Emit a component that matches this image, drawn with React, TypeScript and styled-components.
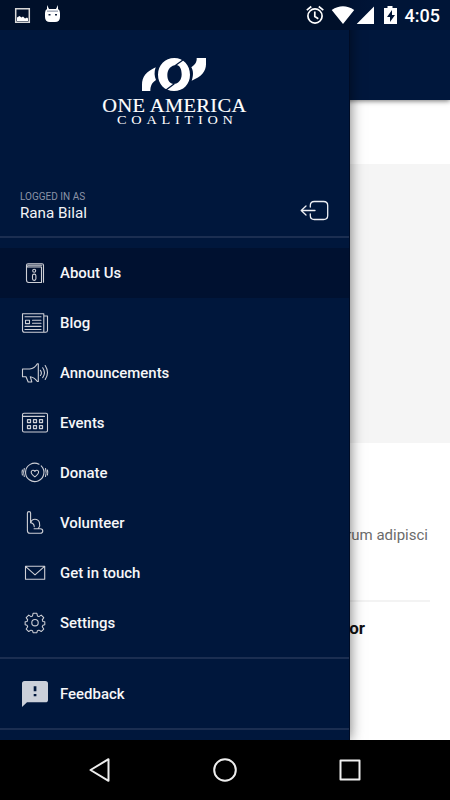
import React from 'react';
import styled, { createGlobalStyle } from 'styled-components';

const GlobalStyle = createGlobalStyle`
  * { box-sizing: border-box; }
  body { margin: 0; background: #000; font-family: Roboto, sans-serif; }
  svg { display: block; flex: none; }
`;

const Screen = styled.div`
  position: relative;
  width: 450px;
  height: 800px;
  overflow: hidden;
  display: flex;
  flex-direction: column;
  background: #fff;
`;
const Page = styled.main`
  flex: 1;
  display: flex;
  flex-direction: column;
`;
const AppBar = styled.header`
  height: 100px;
  flex: none;
  background: #00173c;
  box-shadow: 0 1px 5px rgba(0, 0, 0, 0.55);
  z-index: 1;
`;
const Hero = styled.div`
  height: 279px;
  margin-top: 64px;
  flex: none;
  background: #f5f5f5;
`;
const Excerpt = styled.p`
  margin: 80px 22px 0 0;
  text-align: right;
  font-size: 15px;
  line-height: 24px;
  color: #6b6b6b;
`;
const Rule = styled.div`
  height: 2px;
  margin: 53px 20px 0;
  background: #f3f3f3;
`;
const Heading = styled.h2`
  margin: 14px 85px 0 0;
  text-align: right;
  font-size: 17px;
  line-height: 24px;
  font-weight: 700;
  color: #111;
`;
const Drawer = styled.aside`
  position: absolute;
  top: 0;
  left: 0;
  z-index: 2;
  width: 350px;
  height: 740px;
  padding-top: 30px;
  display: flex;
  flex-direction: column;
  background: #00173c;
  border-right: 1px solid #000c25;
  box-shadow: 0 0 13px rgba(0, 0, 0, 0.55);
`;
const Brand = styled.div`
  height: 155px;
  padding: 20px 0 0 95px;
  flex: none;
`;
const Account = styled.div`
  height: 51px;
  padding: 4px 20px 0 20px;
  flex: none;
  display: flex;
  justify-content: space-between;
`;
const AccountLabel = styled.div`
  font-size: 10px;
  line-height: 15px;
  color: #8b93a6;
`;
const AccountName = styled.div`
  font-size: 15.2px;
  line-height: 18px;
  color: #f2f3f6;
`;
const Logout = styled.button`
  margin: 10px 0 0;
  padding: 0;
  height: 24px;
  border: 0;
  background: none;
`;
const Divider = styled.hr`
  width: 100%;
  height: 2px;
  margin: 0;
  border: 0;
  flex: none;
  background: #1b2e51;
`;
const Menu = styled.nav`
  padding: 10px 0 9px;
`;
const MenuItem = styled.a<{ $active?: boolean }>`
  height: 50px;
  padding-left: 20px;
  display: flex;
  align-items: center;
  background: ${(p) => (p.$active ? '#001130' : 'transparent')};
  color: #f6f6f8;
  font-size: 14.95px;
  font-weight: 500;
`;
const IconSlot = styled.span`
  width: 40px;
  color: #ced0d6;
`;
const StatusBar = styled.div`
  position: absolute;
  top: 0;
  left: 0;
  z-index: 3;
  width: 450px;
  height: 30px;
  padding: 0 10px 0 14px;
  display: flex;
  align-items: center;
  background: linear-gradient(90deg, #00102a 350px, #001233 350px, #001537 375px);
  color: #fff;
`;
const Notices = styled.div`
  flex: 1;
  display: flex;
  gap: 13px;
  align-items: flex-end;
`;
const Clock = styled.span`
  margin-left: 7px;
  font-size: 18px;
  font-weight: 500;
  line-height: 30px;
  padding-top: 1px;
`;
const NavBar = styled.footer`
  height: 60px;
  flex: none;
  padding: 0 37px;
  display: flex;
  align-items: center;
  justify-content: space-between;
  background: #000;
`;
const NavButton = styled.button`
  padding: 0;
  border: 0;
  background: none;
  width: 126px;
  display: flex;
  justify-content: center;
`;

const Glyph = ({ children }: { children: React.ReactNode }) => (
  <svg width="30" height="30" viewBox="0 0 30 30" fill="none" stroke="currentColor" strokeWidth="1.1" strokeLinecap="round" strokeLinejoin="round">
    {children}
  </svg>
);

const AboutIcon = () => (
  <Glyph>
    <path d="M8 5.7h14c1 0 1.5.5 1.5 1.5v17M6.5 7.5v14.5c0 1.7.8 2.5 2.3 2.5h12.7V9H8c-2 0-2-3.3 0-3.3" />
    <path d="M8 7.4h13.5" strokeWidth="1.6" strokeOpacity=".75" />
    <circle cx="14.2" cy="12.7" r="1.5" />
    <rect x="12.5" y="16.1" width="3.4" height="6.3" rx="1.6" />
  </Glyph>
);
const BlogIcon = () => (
  <Glyph>
    <path d="M2.5 5.7h21.3v18.6H4.5c-1.3 0-2-.7-2-2zM23.8 8h3.7v14.5c0 1.3-.7 1.8-2 1.8h-1.7" />
    <path d="M5 8.7h16M12.5 12.3h8.5M12.5 15.3h8.5M5 18.4h16M5 21.5h16" />
    <rect x="5.5" y="12.2" width="4" height="3.4" />
  </Glyph>
);
const MegaphoneIcon = () => (
  <Glyph>
    <path d="M2.5 11h7.2c3.5-.4 6-2.6 7.6-5.3h1v17.8h-1c-1.7-2.7-4-4.2-7-4.8l1.5 5.2-3.6.1-2.2-5.2H2.5z" />
    <path d="M20.4 12.3q2 2.6 0 5.2M22.7 9.8q3.6 5.2 0 9.8M25.2 7.5q4.6 7 0 14" />
  </Glyph>
);
const CalendarIcon = () => (
  <Glyph>
    <path d="M4 5.2h22c1 0 1.5.5 1.5 1.5v15.8c0 1-.5 1.5-1.5 1.5H4c-1 0-1.5-.5-1.5-1.5V6.7c0-1 .5-1.5 1.5-1.5M3 8.4h21.5" />
    {[7.5, 13.5, 19.5].flatMap((x) => [11.5, 17.5].map((y) => (
      <rect key={`${x}-${y}`} x={x} y={y} width="3" height="3" strokeWidth="1.25" />
    )))}
  </Glyph>
);
const DonateIcon = () => (
  <Glyph>
    <path d="M19 6.2A9.2 9.2 0 1 0 21.2 7.8" />
    <path d="M14.9 18.9c-2-1.5-4-3-3.7-5 .3-2 2.7-2.2 3.7-.5 1-1.7 3.6-1.5 3.7.5.1 2-1.7 3.5-3.7 5z" />
    <path d="M4.3 10.5q-1.4 4 0 8M2.4 12q-.8 2.5 0 5M25.5 10.5q1.4 4 0 8M27.4 12q.8 2.5 0 5" />
  </Glyph>
);
const VolunteerIcon = () => (
  <Glyph>
    <path d="M7.4 22.5V5c0-1.9 3.2-1.9 3.2 0v9.6M7.4 22.5c0 1.8.8 2.8 2.6 2.8h10.3c3.3 0 3.3-4.5 0-4.5h-6.2" />
    <path d="M10.7 14.6c.6-2.1 2-3.3 4.2-3.3 4.6 0 6.3 5.4 3.4 9.2M10.6 14.6c2.6.6 3.7 2 3.6 4" />
  </Glyph>
);
const MailIcon = () => (
  <Glyph>
    <path d="M5.5 8.3h19.2v12.9H5.5zM6 8.9l9 8 9-8" />
  </Glyph>
);
const GearIcon = () => (
  <Glyph>
    <path transform="translate(.8 .1) scale(.945)" d="M13 5.5h4l.6 2.8 1.6.7 2.4-1.6 2.7 2.7-1.6 2.4.7 1.6 2 .4v3.2l-2 .5-.7 1.6 1.6 2.4-2.7 2.6-2.4-1.5-1.6.6-.6 2.1h-4l-.6-2.1-1.6-.6-2.4 1.5-2.7-2.6 1.6-2.4-.7-1.6-2-.5v-3.2l2-.4.7-1.6-1.6-2.4 2.7-2.7L10.8 9l1.6-.7z" />
    <circle cx="15" cy="14.7" r="3.2" />
  </Glyph>
);
const FeedbackIcon = () => (
  <svg width="30" height="30" viewBox="0 0 30 30">
    <path fill="#cbd0d9" d="M4.6 2h20.8Q28 2 28 4.6v16.3q0 2.4-2.6 2.4H7L2 28V4.6Q2 2 4.6 2z" />
    <path fill="#00173c" d="M13.7 7.3h2.7v5h-2.7zM13.7 15h2.7v2.3h-2.7z" />
  </svg>
);

const Logo = () => (
  <svg width="160" height="80" viewBox="0 0 480 240" fill="#fff">
    <path d="M305 24h28v19c0 21-14 38-43 49 6-15 5-30-1-40 11-8 17-16 16-28zM141 123v-18c0-25 13-40 41-53-5 14-4 27 1 38-11 7-17 17-17 33z" />
    <path fillRule="evenodd" d="M238 24c27 0 47 22 47 50s-20 49-48 49-48-21-48-49 21-50 49-50zM244 45c-15 0-27 13-27 30 0 16 8 27 19 27 15 0 24-13 24-29s-6-28-16-28z" />
    <path d="M212 121l26-20M240 47l29-21" fill="none" stroke="#00173c" strokeWidth="4" />
    <text x="22" y="185" fontFamily="Liberation Serif, serif" fontSize="54" letterSpacing="1" textLength="433" lengthAdjust="spacingAndGlyphs" stroke="#fff" strokeWidth=".4">ONE AMERICA</text>
    <text x="66" y="222" fontFamily="Liberation Serif, serif" fontSize="39" letterSpacing="13" textLength="362" lengthAdjust="spacingAndGlyphs">COALITION</text>
  </svg>
);

const items: { label: string; Icon: () => React.JSX.Element }[] = [
  { label: 'About Us', Icon: AboutIcon },
  { label: 'Blog', Icon: BlogIcon },
  { label: 'Announcements', Icon: MegaphoneIcon },
  { label: 'Events', Icon: CalendarIcon },
  { label: 'Donate', Icon: DonateIcon },
  { label: 'Volunteer', Icon: VolunteerIcon },
  { label: 'Get in touch', Icon: MailIcon },
  { label: 'Settings', Icon: GearIcon },
];

const StatusIcons = () => (
  <svg width="93" height="30" viewBox="0 0 93 30" fill="#fff">
    <g fill="none" stroke="#fff" strokeWidth="1.7">
      <circle cx="10" cy="16" r="7.1" />
      <path d="M9.8 11.5v5l3.5 2.2M1.8 10.2l4.5-3.7M13.8 6.5l4.5 3.7" />
    </g>
    <path d="M26.7 10Q38 2.5 49.2 10L38 24zM51.7 24L69 6.5V24zM79 8h3.5V6h5v2H92v16H79z" />
    <path fill="#001537" d="M87 10l-5 7h3v5l5-7h-3z" />
  </svg>
);

export default function App() {
  return (
    <Screen>
      <GlobalStyle />
      <StatusBar>
        <Notices>
          <svg width="17" height="18" viewBox="0 0 17 18">
            <path d="M1.7 1.7h13.6v13.6H1.7z" fill="none" stroke="#d8d8d8" strokeWidth="1.5" />
            <path fill="#fff" d="M3 14v-3.5l2.5-1.5 2 1.5L9 9.5l2 2 2-1 1 1V14z" />
          </svg>
          <svg width="17" height="20" viewBox="0 0 17 20">
            <path fill="#fff" d="M3 0l2 4h7l2-4v4q2 1 2 4v4q0 5-5 5H6q-5 0-5-5V8q0-3 2-4z" />
            <path fill="#9aa2b2" d="M3 5.5h11v1.3H3z" />
            <path fill="#13213d" d="M4.5 9h2v1.5h-2zM11 9h2v1.5h-2z" />
          </svg>
        </Notices>
        <StatusIcons />
        <Clock>4:05</Clock>
      </StatusBar>
      <Page>
        <AppBar />
        <Hero />
        <Excerpt>rum adipisci</Excerpt>
        <Rule />
        <Heading>or</Heading>
      </Page>
      <Drawer>
        <Brand><Logo /></Brand>
        <Account>
          <div>
            <AccountLabel>LOGGED IN AS</AccountLabel>
            <AccountName>Rana Bilal</AccountName>
          </div>
          <Logout aria-label="Log out">
            <svg width="29" height="24" viewBox="0 0 29 24" fill="none" stroke="#eef0f4" strokeWidth="1.3" strokeLinecap="round" strokeLinejoin="round">
              <path d="M10.3 8V6.5q0-4 4-4h9.2q4.2 0 4.2 4v10q0 4-4.2 4h-9.2q-4 0-4-4V15M15 11.5H1.5M6 7l-4.8 4.5L6 16" />
            </svg>
          </Logout>
        </Account>
        <Divider />
        <Menu>
          {items.map(({ label, Icon }, i) => (
            <MenuItem key={label} $active={i === 0}>
              <IconSlot><Icon /></IconSlot>
              {label}
            </MenuItem>
          ))}
        </Menu>
        <Divider />
        <Menu>
          <MenuItem>
            <IconSlot><FeedbackIcon /></IconSlot>
            Feedback
          </MenuItem>
        </Menu>
        <Divider />
      </Drawer>
      <NavBar>
        <NavButton aria-label="Back">
          <svg width="26" height="26" viewBox="0 0 26 26" fill="none" stroke="#eee" strokeWidth="2" strokeLinejoin="round"><path d="M21.5 2.2v21.6L3.5 13z" /></svg>
        </NavButton>
        <NavButton aria-label="Home">
          <svg width="26" height="26" viewBox="0 0 26 26" fill="none" stroke="#eee" strokeWidth="2"><circle cx="13" cy="13" r="10.8" /></svg>
        </NavButton>
        <NavButton aria-label="Recent apps">
          <svg width="26" height="26" viewBox="0 0 26 26" fill="none" stroke="#eee" strokeWidth="2" strokeLinejoin="round"><path d="M3.5 3.5h19v19h-19z" /></svg>
        </NavButton>
      </NavBar>
    </Screen>
  );
}
